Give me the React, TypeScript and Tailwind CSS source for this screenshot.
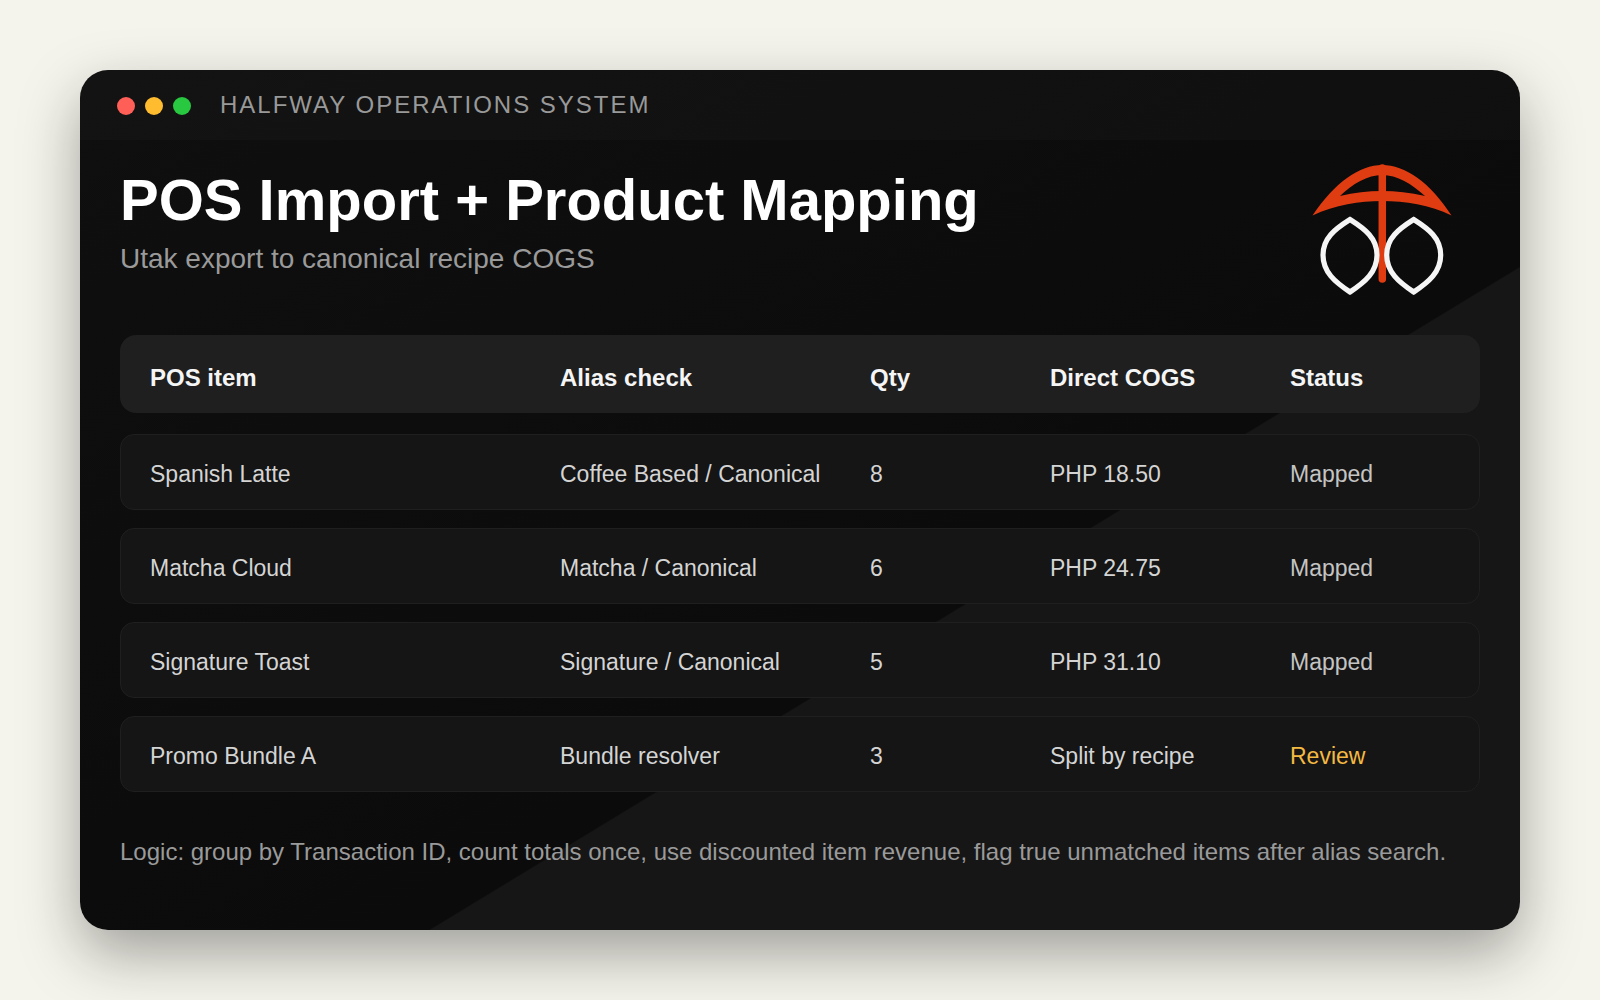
const rows = [
  { item: "Spanish Latte", alias: "Coffee Based / Canonical", qty: "8", cogs: "PHP 18.50", status: "Mapped" },
  { item: "Matcha Cloud", alias: "Matcha / Canonical", qty: "6", cogs: "PHP 24.75", status: "Mapped" },
  { item: "Signature Toast", alias: "Signature / Canonical", qty: "5", cogs: "PHP 31.10", status: "Mapped" },
  { item: "Promo Bundle A", alias: "Bundle resolver", qty: "3", cogs: "Split by recipe", status: "Review" },
];

const cols = "grid grid-cols-[410px_310px_180px_240px_1fr] items-center";

function Logo() {
  return (
    <svg viewBox="70 30 144 138" className="w-[144px] h-[138px] shrink-0 mr-[26px] mt-[22px]">
      <path
        fillRule="evenodd"
        fill="#e03c12"
        d="M72.5 83.5 C95 50 120 33 142 33 C165 33 190 50 211.5 83.5 C190 73 165 69 142 69 C120 69 95 73 72.5 83.5 Z M100 64 C112 52 128 43 142 43 C157 43 172 52 185 64 C170 60.5 156 59 142 59 C128 59 114 60.5 100 64 Z"
      />
      <line x1="142.3" y1="36" x2="142.3" y2="147" stroke="#e03c12" strokeWidth="7.5" strokeLinecap="round" />
      <path
        fill="none"
        stroke="#f5f5f5"
        strokeWidth="5.2"
        d="M110 87.5 C125 97 137 106 137 123 C137 140 125 150 110 160 C95 150 83 140 83 123 C83 106 95 97 110 87.5 Z"
      />
      <path
        fill="none"
        stroke="#f5f5f5"
        strokeWidth="5.2"
        d="M173.7 87.5 C188.7 97 200.7 106 200.7 123 C200.7 140 188.7 150 173.7 160 C158.7 150 146.7 140 146.7 123 C146.7 106 158.7 97 173.7 87.5 Z"
      />
    </svg>
  );
}

export default function App() {
  return (
    <div className="min-h-screen bg-[#f5f4ec] pt-[70px] font-['Liberation_Sans',Arial,sans-serif]">
      <div className="mx-auto w-[1440px] h-[860px] rounded-[28px] overflow-hidden shadow-[0_24px_60px_rgba(0,0,0,0.35)] bg-[linear-gradient(148.7deg,#0f0f0f_0%,#0b0b0b_61.75%,#161616_61.85%,#161616_100%)]">
        <div className="h-[70px] flex items-center pl-[37px] bg-white/[0.02]">
          <div className="flex gap-[10px] translate-y-[1px]">
            <span className="w-[18px] h-[18px] rounded-full bg-[#ff5f57]" />
            <span className="w-[18px] h-[18px] rounded-full bg-[#febc2e]" />
            <span className="w-[18px] h-[18px] rounded-full bg-[#28c840]" />
          </div>
          <span className="ml-[29px] text-[24px] tracking-[2px] text-[#999999]">HALFWAY OPERATIONS SYSTEM</span>
        </div>

        <div className="px-10">
          <div className="flex justify-between items-start h-[195px]">
            <div className="pt-[26px]">
              <h1 className="text-[58px] leading-[68px] font-bold text-white">POS Import + Product Mapping</h1>
              <p className="mt-[7px] text-[28px] leading-[36px] text-[#9a9a9a]">Utak export to canonical recipe COGS</p>
            </div>
            <Logo />
          </div>

          <div className={`${cols} h-[78px] px-[30px] pt-[8px] rounded-[16px] bg-[#1f1f1f] text-[24px] font-bold text-[#f5f5f5]`}>
            <span>POS item</span>
            <span>Alias check</span>
            <span>Qty</span>
            <span>Direct COGS</span>
            <span>Status</span>
          </div>

          <div className="mt-[21px] flex flex-col gap-[18px]">
            {rows.map((row) => (
              <div
                key={row.item}
                className={`${cols} h-[76px] px-[29px] pt-[5px] rounded-[14px] bg-[#151515] border border-[#1f1f1f] text-[23px] text-[#d4d4d4]`}
              >
                <span>{row.item}</span>
                <span className="whitespace-nowrap">{row.alias}</span>
                <span>{row.qty}</span>
                <span>{row.cogs}</span>
                <span className={row.status === "Review" ? "text-[#f4b942]" : "text-[#c4c4c4]"}>{row.status}</span>
              </div>
            ))}
          </div>

          <p className="mt-[42px] text-[24px] leading-[36px] text-[#9a9a9a] whitespace-nowrap">
            Logic: group by Transaction ID, count totals once, use discounted item revenue, flag true unmatched items after alias search.
          </p>
        </div>
      </div>
    </div>
  );
}
